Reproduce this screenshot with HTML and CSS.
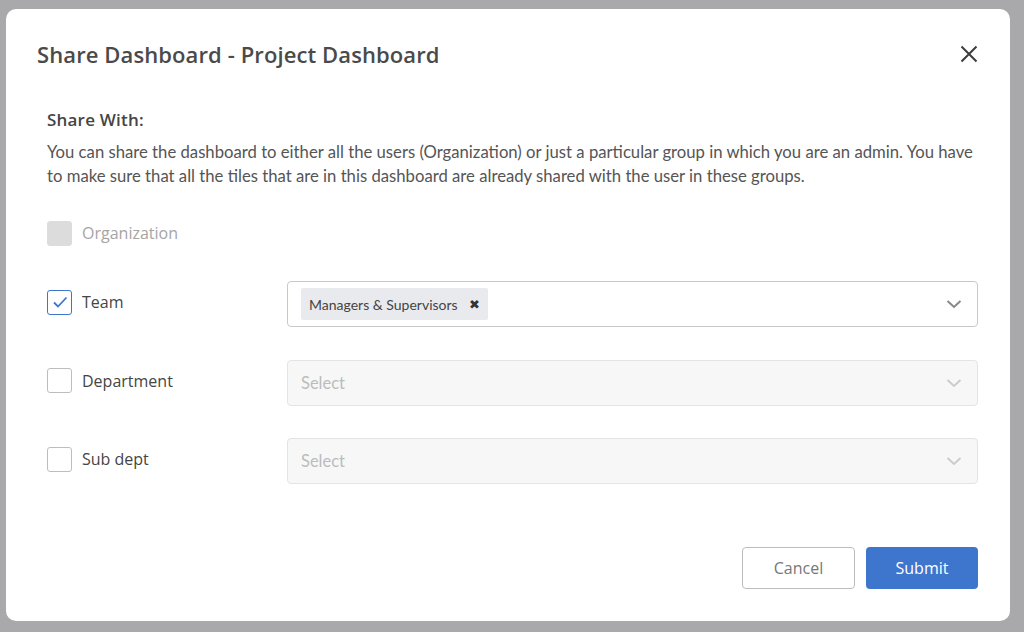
FILE: index.html
```html
<!DOCTYPE html>
<html lang="en">
<head>
    <meta charset="UTF-8">
    <title>Share Dashboard</title>
    <link rel="stylesheet" href="styles.css">
</head>
<body>
<!-- Share-Dialog -->
<div class="modal">
    <div class="modal-header">
        <h2 class="modal-title">Share Dashboard - Project Dashboard</h2>
        <button class="close-btn" aria-label="Close">
            <svg width="18" height="18" viewBox="0 0 18 18"><path d="M1.5 1.5L16.5 16.5M16.5 1.5L1.5 16.5" stroke="#3c3c3c" stroke-width="2" fill="none"/></svg>
        </button>
    </div>

    <div class="modal-body">
        <h3 class="section-title">Share With:</h3>
        <p class="description">You can share the dashboard to either all the users (Organization) or just a particular group in which you are an admin. You have to make sure that all the tiles that are in this dashboard are already shared with the user in these groups.</p>

        <div class="row row-org">
            <label class="check-label disabled">
                <span class="checkbox disabled"></span>
                Organization
            </label>
        </div>

        <div class="row">
            <label class="check-label">
                <span class="checkbox checked">
                    <svg width="16" height="12" viewBox="0 0 16 12"><path d="M2 6.5L6 10.5L14.5 1.5" stroke="#3f76cd" stroke-width="1.8" fill="none"/></svg>
                </span>
                Team
            </label>
            <div class="select">
                <span class="tag">Managers &amp; Supervisors <span class="tag-x">&#x2716;</span></span>
                <span class="chevron">
                    <svg width="16" height="10" viewBox="0 0 16 10"><path d="M1.5 2L8 8L14.5 2" stroke="#888" stroke-width="2" fill="none"/></svg>
                </span>
            </div>
        </div>

        <div class="row">
            <label class="check-label">
                <span class="checkbox"></span>
                Department
            </label>
            <div class="select disabled">
                <span class="placeholder">Select</span>
                <span class="chevron">
                    <svg width="16" height="10" viewBox="0 0 16 10"><path d="M1.5 2L8 8L14.5 2" stroke="#ccc" stroke-width="2" fill="none"/></svg>
                </span>
            </div>
        </div>

        <div class="row">
            <label class="check-label">
                <span class="checkbox"></span>
                Sub dept
            </label>
            <div class="select disabled">
                <span class="placeholder">Select</span>
                <span class="chevron">
                    <svg width="16" height="10" viewBox="0 0 16 10"><path d="M1.5 2L8 8L14.5 2" stroke="#ccc" stroke-width="2" fill="none"/></svg>
                </span>
            </div>
        </div>
    </div>

    <div class="modal-footer">
        <button class="btn btn-cancel">Cancel</button>
        <button class="btn btn-submit">Submit</button>
    </div>
</div>
</body>
</html>
```

FILE: styles.css
```css
/* Hintergrund hinter dem Dialog */
body {
    margin: 0;
    background-color: #a9a9ac;
    font-family: "Open Sans", "Noto Sans", sans-serif;
    color: #444;
}

/* Dialog-Box */
.modal {
    width: 1004px;
    height: 612px;
    margin: 9px 0 0 6px;
    background-color: #fff;
    border-radius: 10px;
    box-sizing: border-box;
    display: flex;
    flex-direction: column;
}

/* Kopfzeile */
.modal-header {
    display: flex;
    align-items: center;
    justify-content: space-between;
    padding: 30px 32px 0 31px;
    height: 30px;
}

.modal-title {
    margin: 0;
    font-size: 22px;
    font-weight: 600;
    color: #4a4a4a;
    letter-spacing: 0.1px;
}

.close-btn {
    border: none;
    background: none;
    padding: 0;
    width: 18px;
    height: 18px;
    cursor: pointer;
    display: flex;
}

/* Inhalt */
.modal-body {
    padding: 0 32px 0 41px;
    flex: 1;
}

.section-title {
    margin: 40px 0 0;
    font-size: 17px;
    font-weight: 600;
    color: #454545;
    line-height: 22px;
    letter-spacing: 0.2px;
}

.description {
    margin: 9px 0 0;
    font-family: "Lato", "Liberation Sans", sans-serif;
    font-size: 16.7px;
    line-height: 24px;
    color: #555;
}

/* Zeilen mit Checkbox und Auswahl */
.row {
    display: flex;
    align-items: center;
    height: 46px;
    margin-top: 32.5px;
}

.row-org {
    margin-top: 34px;
    height: 26px;
}

.row-org + .row {
    margin-top: 33px;
}

.check-label {
    width: 240px;
    display: flex;
    align-items: center;
    gap: 10px;
    font-size: 16px;
    color: #454545;
    flex-shrink: 0;
    margin-bottom: 4px; /* etwas über der Mitte der Auswahl */
}

.check-label.disabled {
    color: #a5a5a5;
}

.checkbox {
    width: 23px;
    height: 23px;
    border: 1px solid #bdbdbd;
    border-radius: 3px;
    box-sizing: content-box;
    display: flex;
    align-items: center;
    justify-content: center;
}

.checkbox.disabled {
    background-color: #dcdcdd;
    border-color: #dcdcdd;
}

.checkbox.checked {
    border-color: #3f76cd;
}

.select {
    flex: 1;
    height: 46px;
    border: 1px solid #c9c9c9;
    border-radius: 4px;
    box-sizing: border-box;
    display: flex;
    align-items: center;
    padding: 0 15px 0 13px;
}

.select.disabled {
    background-color: #f7f7f7;
    border-color: #e4e4e4;
}

.tag {
    background-color: #e9eaee;
    font-family: "Lato", "Liberation Sans", sans-serif;
    font-size: 14px;
    color: #444;
    height: 32px;
    display: flex;
    align-items: center;
    padding: 0 8px 0 8px;
    border-radius: 2px;
}

.tag-x {
    font-size: 13px;
    margin-left: 11px;
    color: #333;
}

.placeholder {
    font-family: "Lato", "Liberation Sans", sans-serif;
    font-size: 16.5px;
    color: #bcbcbc;
}

.chevron {
    margin-left: auto;
    display: flex;
}

/* Fußzeile mit Tasten */
.modal-footer {
    display: flex;
    justify-content: flex-end;
    gap: 11px;
    padding: 0 32px 32px 0;
}

.btn {
    width: 113px;
    height: 42px;
    border-radius: 4px;
    font-family: "Open Sans", "Noto Sans", sans-serif;
    font-size: 16px;
    cursor: pointer;
}

.btn-cancel {
    background-color: #fff;
    border: 1px solid #bcbcbc;
    color: #777;
}

.btn-submit {
    background-color: #3f76cd;
    border: none;
    color: #fff;
    width: 112px;
}
```
